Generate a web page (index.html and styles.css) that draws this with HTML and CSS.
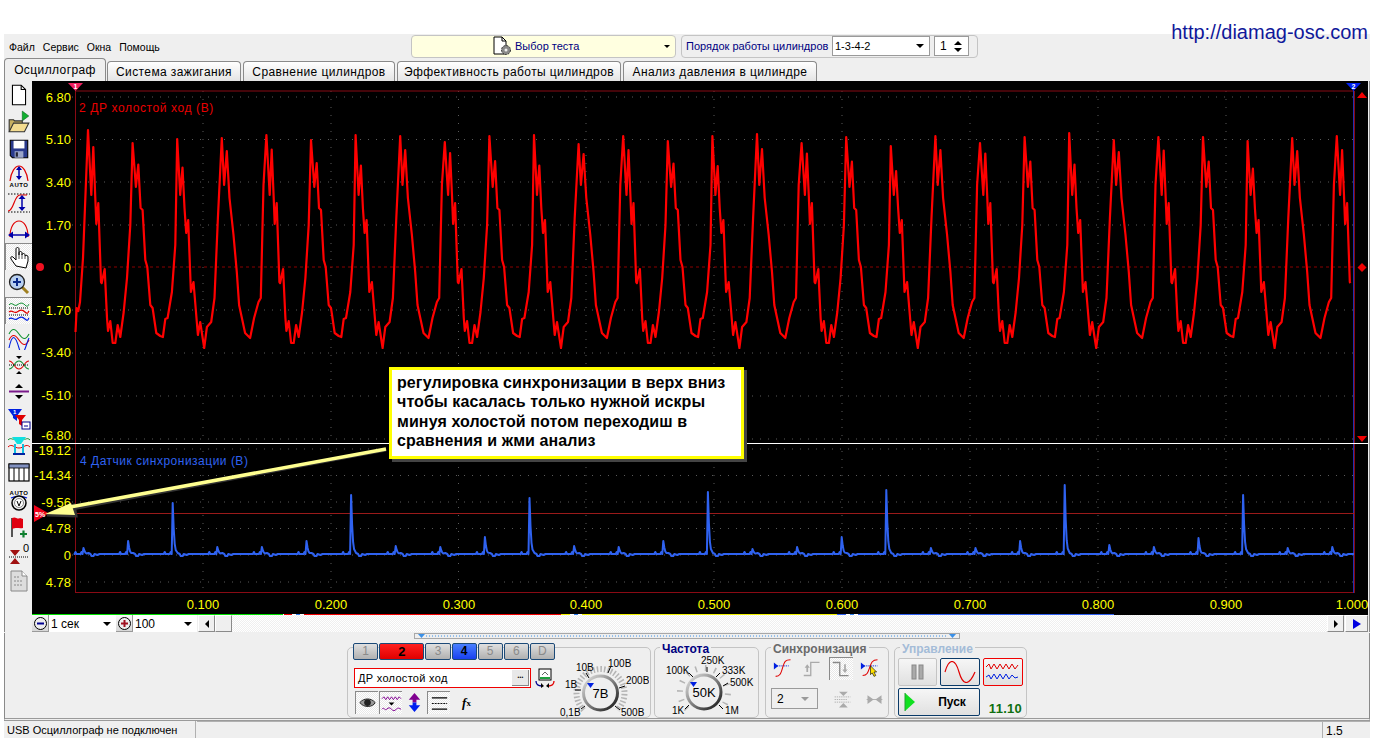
FILE: index.html
```html
<!DOCTYPE html>
<html lang="ru">
<head>
  <meta charset="UTF-8" />
  <title>USB Осциллограф</title>
  <link rel="stylesheet" href="styles.css">
</head>
<body>
  <a class="site-link">http://diamag-osc.com</a>

  <div class="app">
    <div class="top-bar">
      <div class="menu">
        <span>Файл</span><span>Сервис</span><span>Окна</span><span>Помощь</span>
      </div>
      <div class="test-select">
        <svg class="test-icon" width="22" height="20" viewBox="0 0 22 20">
          <path d="M3 1h8l4 4v13H3z" fill="#fff" stroke="#000"/>
          <path d="M11 1v4h4" fill="none" stroke="#000"/>
          <circle cx="15" cy="14" r="4.5" fill="#888" stroke="#333" stroke-width="1" stroke-dasharray="2 1"/>
          <circle cx="15" cy="14" r="1.5" fill="#eee"/>
        </svg>
        <span class="test-label">Выбор теста</span>
        <span class="arrow-down small"></span>
      </div>
      <div class="order-panel">
        <span class="order-label">Порядок работы цилиндров</span>
        <div class="combo order-combo"><span>1-3-4-2</span><span class="arrow-down"></span></div>
        <div class="spin"><span>1</span><span class="spin-arrows"><i class="arrow-up"></i><i class="arrow-down"></i></span></div>
      </div>
    </div>

    <div class="tabs">
      <div class="tab active">Осциллограф</div>
      <div class="tab w2">Система зажигания</div>
      <div class="tab w3">Сравнение цилиндров</div>
      <div class="tab w4">Эффективность работы цилиндров</div>
      <div class="tab w5">Анализ давления в цилиндре</div>
    </div>

    <div class="workspace">
      <div class="toolbar">
        <div class="tool"><svg viewBox="0 0 22 22"><path d="M5 2h8l4 4v14H5z" fill="#fff" stroke="#000"/><path d="M13 2v4h4" fill="none" stroke="#000"/></svg></div>
        <div class="tool"><svg viewBox="0 0 22 22"><path d="M14 1v9l6-4.500z" fill="#10b030" stroke="#086018" stroke-width=".5"/><path d="M2 20V9h4l1 1h7v3" fill="#c8b060" stroke="#333"/><path d="M2 20l4-8h14l-4 8z" fill="#f4dc90" stroke="#333"/></svg></div>
        <div class="tool"><svg viewBox="0 0 22 22"><path d="M3 3h16v16H5l-2-2z" fill="#2a3a8c" stroke="#000"/><rect x="6" y="3.500" width="10" height="7" fill="#fff"/><rect x="7" y="13" width="8" height="6" fill="#9aa4c8"/><rect x="8" y="14" width="2" height="4" fill="#223"/></svg></div>
        <div class="tool"><svg viewBox="0 0 24 24"><path d="M3 17C4 8 8 2 12 2s8 6 9 15" fill="none" stroke="#e00000" stroke-width="1.200"/><path d="M12 3v12" stroke="#00a" stroke-width="1.500"/><path d="M9 6l3-4 3 4zM9 12l3 4 3-4z" fill="#00a"/><text class="tiny-label" x="12" y="23">AUTO</text></svg></div>
        <div class="tool"><svg viewBox="0 0 24 24"><path d="M1 3h22" stroke="#000" stroke-dasharray="1.500 1.500"/><path d="M1 21h22" stroke="#000" stroke-dasharray="1.500 1.500"/><path d="M1 20c6 0 6-16 12-16 3 0 4 0 7 0" fill="none" stroke="#e00000" stroke-width="1.200"/><path d="M15 5v14" stroke="#00a" stroke-width="1.500"/><path d="M11.500 8l3.500-4 3.500 4zM11.500 16l3.500 4 3.500-4z" fill="#00a"/></svg></div>
        <div class="tool"><svg viewBox="0 0 24 24"><path d="M3 19C3 9 7 3 12 3s9 6 9 16" fill="none" stroke="#e00000" stroke-width="1.200"/><path d="M3 17h18" stroke="#00a" stroke-width="1.500"/><path d="M6 13.500L1 17l5 3.500zM18 13.500l5 3.500-5 3.500z" fill="#00a"/></svg></div>
        <div class="tool pressed"><svg viewBox="0 0 24 24"><path d="M9 21l-5-7c-1-2 1-3 2-2l3 3V4c0-2 3-2 3 0v6-2c0-2 3-2 3 0v2c0-2 3-2 3 0v1c1-1 3-1 3 1v4l-2 7z" fill="#fff" stroke="#000"/><path d="M12 10v4M15 10v4M18 11v3" stroke="#000" stroke-width=".7"/></svg></div>
        <div class="tool"><svg viewBox="0 0 24 24"><path d="M14 14l7 7" stroke="#a08020" stroke-width="3"/><circle cx="10" cy="10" r="7.500" fill="#b8d0f0" stroke="#222" stroke-width="1.300"/><path d="M6 10h8M10 6v8" stroke="#0a2a8a" stroke-width="2"/></svg></div>
        <div class="tool pressed"><svg viewBox="0 0 24 24"><path d="M2 6c3-4 5 2 8 0s5-3 8 0 3 0 4-1" fill="none" stroke="#109030"/><path d="M2 9h20M2 16h20" stroke="#000" stroke-dasharray="1 1"/><path d="M2 13c3-3 5 2 8 0s5-3 8 0 3 0 4-1" fill="none" stroke="#e00000" stroke-width="1.200"/><path d="M2 20c3-3 5 2 8 0s5-3 8 0 3 0 4-1" fill="none" stroke="#0020e0" stroke-width="1.200"/></svg></div>
        <div class="tool"><svg viewBox="0 0 24 24"><path d="M2 8c3-6 6-6 10 0s7 6 10 0" fill="none" stroke="#109030" stroke-width="1.100"/><path d="M2 14c3-6 6-6 10 0s7 6 10 0" fill="none" stroke="#e00000" stroke-width="1.100"/><path d="M2 22c3-14 6-14 10 0s7-4 10-10" fill="none" stroke="#0020e0" stroke-width="1.100"/></svg></div>
        <div class="tool"><svg viewBox="0 0 24 24"><path d="M9 3h6l-3 3zM9 21h6l-3-3z" fill="#000"/><path d="M2 8c5 0 5 8 10 8s5-8 10-8" fill="none" stroke="#e00000" stroke-width="1.100"/><path d="M2 16c5 0 5-8 10-8s5 8 10 8" fill="none" stroke="#109030" stroke-width="1.100"/><path d="M2 12h20" stroke="#000" stroke-dasharray="1 1"/></svg></div>
        <div class="tool"><svg viewBox="0 0 24 24"><path d="M2 11.500h20" stroke="#7a1a8a" stroke-width="2"/><path d="M8 8l4-4 4 4zM8 15l4 4 4-4z" fill="#000"/></svg></div>
        <div class="tool"><svg viewBox="0 0 24 24"><path d="M1 2h14l-5 7v5l-4-3V9z" fill="#0020e0"/><path d="M8 8h11l-4 5v6l-3-2v-4z" fill="#e00000"/><text class="tiny-label white" x="8" y="7">1</text><rect x="15" y="15" width="8" height="7" fill="#fff" stroke="#000090"/><path d="M17 19h4" stroke="#000090"/></svg></div>
        <div class="tool"><svg viewBox="0 0 24 24"><path d="M1 6c3-3 4 0 6-1h10c2 1 3-2 6 1" fill="none" stroke="#109030"/><path d="M5 3h14l-5 7H10z" fill="#10e0e0"/><path d="M1 13c4-4 6 1 11 1s7-5 11-1" fill="none" stroke="#e00000"/><path d="M8 10v9M16 10v9" stroke="#10c0e0" stroke-width="2"/><path d="M6 20h12" stroke="#0020a0" stroke-width="2"/></svg></div>
        <div class="tool"><svg viewBox="0 0 24 24"><rect x="2" y="3" width="20" height="17" fill="#fff" stroke="#000" stroke-width="1.200"/><rect x="2" y="3" width="20" height="4" fill="#8090c0" stroke="#000" stroke-width=".8"/><path d="M7 7v13M12 7v13M17 7v13" stroke="#000"/></svg></div>
        <div class="tool"><svg viewBox="0 0 24 24"><text class="tiny-label" x="12" y="7">AUTO</text><path d="M4 10c4-2 12-2 16 0" fill="none" stroke="#0020e0" stroke-width="1.300"/><circle cx="12" cy="15" r="7" fill="#eee" stroke="#000" stroke-width="1.500"/><circle cx="12" cy="15" r="4.500" fill="#fff" stroke="#888"/><path d="M10 13l2 5 2-5" fill="none" stroke="#000"/></svg></div>
        <div class="tool"><svg viewBox="0 0 24 24"><path d="M5 3v19" stroke="#000" stroke-width="1.300"/><path d="M5 3c4-2 5 2 8 0l3 1v9c-4 1-6-1-11 1z" fill="#e00010"/><path d="M13 19h7M16.500 15.500v7" stroke="#108030" stroke-width="2.200"/></svg></div>
        <div class="tool"><svg viewBox="0 0 24 24"><path d="M3 8h10l-5 6zM3 22h10l-5-6z" fill="#a01010"/><path d="M2 15h20" stroke="#000" stroke-dasharray="1 1"/><text class="zero-label" x="19" y="10">0</text></svg></div>
        <div class="tool"><svg viewBox="0 0 24 24"><path d="M4 2h11l5 5v15H4z" fill="#ddd" stroke="#888"/><path d="M15 2v5h5" fill="#fff" stroke="#888"/><path d="M7 8h5M7 12h9M7 16h9" stroke="#888" stroke-dasharray="2 1"/></svg></div>
      </div>

      <div class="scope-column">
        <div class="scope">
          <svg class="scope-plot" width="1336" height="534" viewBox="32 81 1336 534">
            <rect x="32" y="81" width="1336" height="534" fill="#000"/>

            <path class="grid" d="M72 97H1354M72 139.500H1354M72 182H1354M72 225H1354M72 310H1354M72 353H1354M72 396H1354M72 439H1354"/>
            <path class="grid" d="M72 449H1354M72 475.500H1354M72 502H1354M72 528.500H1354M72 555H1354M72 582H1354"/>
            <path class="grid" d="M203 91V592M331 91V592M458.500 91V592M586 91V592M714 91V592M842 91V592M970 91V592M1098 91V592M1226 91V592"/>
            <path class="zero-line" d="M72 267H1354"/>

            <path class="frame-line" d="M75 91H1354M75 592.500H1354M75.500 88V593M1354.500 91V593"/>
            <path class="blue-cursor" d="M1353.500 88V593"/>
            <path class="trigger-line" d="M50 513.500H1354"/>

            <path id="traceTop" class="trace-top" d=""/>
            <path id="traceSync" class="trace-sync" d=""/>

            <path class="splitter" d="M32 443.500H1368"/>

            <text class="axis-y" x="71" y="102">6.80</text>
            <text class="axis-y" x="71" y="144">5.10</text>
            <text class="axis-y" x="71" y="187">3.40</text>
            <text class="axis-y" x="71" y="230">1.70</text>
            <text class="axis-y" x="71" y="272">0</text>
            <text class="axis-y" x="71" y="315">-1.70</text>
            <text class="axis-y" x="71" y="357">-3.40</text>
            <text class="axis-y" x="71" y="400">-5.10</text>
            <text class="axis-y" x="71" y="440">-6.80</text>
            <text class="axis-y" x="71" y="455">-19.12</text>
            <text class="axis-y" x="71" y="480">-14.34</text>
            <text class="axis-y" x="71" y="507">-9.56</text>
            <text class="axis-y" x="71" y="533">-4.78</text>
            <text class="axis-y" x="71" y="560">0</text>
            <text class="axis-y" x="71" y="587">4.78</text>

            <text class="axis-x" x="203" y="609">0.100</text>
            <text class="axis-x" x="331" y="609">0.200</text>
            <text class="axis-x" x="459" y="609">0.300</text>
            <text class="axis-x" x="586" y="609">0.400</text>
            <text class="axis-x" x="714" y="609">0.500</text>
            <text class="axis-x" x="842" y="609">0.600</text>
            <text class="axis-x" x="970" y="609">0.700</text>
            <text class="axis-x" x="1098" y="609">0.800</text>
            <text class="axis-x" x="1226" y="609">0.900</text>
            <text class="axis-x" x="1352" y="609">1.000</text>

            <text class="trace-name red" x="79" y="112">2 ДР холостой ход (В)</text>
            <text class="trace-name blue" x="80" y="465">4 Датчик синхронизации (В)</text>

            <!-- cursors and markers -->
            <path d="M68 83h15l-7.500 8z" fill="#f02060"/>
            <text class="marker-num" x="75.500" y="89">1</text>
            <path d="M1346 83h15l-7.500 8z" fill="#0020f0"/>
            <text class="marker-num" x="1353.500" y="89">2</text>
            <circle cx="40" cy="267" r="4" fill="#f01020"/>
            <path d="M1357 98l5-6 5 6zM1357 436l5 6 5-6z" fill="#f00000"/>
            <path d="M1362 263l4.500 4.500-4.500 4.500-4.500-4.500z" fill="#f00000"/>
            <path d="M34 505l15 8.500-15 8.500z" fill="#f00018"/>
            <text class="marker-small" x="35" y="516.500">5%</text>

            <!-- hint arrow from the note to the trigger level -->
            <path class="hint-shadow" d="M386 450L72 509M47 515L74 505L76 516z"/>
            <path class="hint-line" d="M386 449L70 507"/>
            <path class="hint-head" d="M45 514L71 503L75 515z"/>

            <!-- coloured strip under the plot -->
            <rect x="32" y="614" width="251" height="2" fill="#00e000"/>
            <rect x="283" y="614" width="21" height="2" fill="#fff"/>
            <rect x="284" y="614" width="8" height="2" fill="#f00000"/>
            <rect x="296" y="614" width="4" height="2" fill="#3080f0"/>
            <rect x="304" y="614" width="257" height="2" fill="#f00000"/>
            <rect x="561" y="614" width="21" height="2" fill="#fff"/>
            <rect x="561" y="614" width="9" height="2" fill="#f0f000"/>
            <rect x="574" y="614" width="4" height="2" fill="#3080f0"/>
            <rect x="582" y="614" width="255" height="2" fill="#f0f000"/>
            <rect x="837" y="614" width="21" height="2" fill="#fff"/>
            <rect x="837" y="614" width="9" height="2" fill="#3060f0"/>
            <rect x="850" y="614" width="4" height="2" fill="#3080f0"/>
            <rect x="858" y="614" width="256" height="2" fill="#3060f0"/>
          </svg>

          <div class="note">
            регулировка синхронизации в верх вниз<br>
            чтобы касалась только нужной искры<br>
            минуя холостой потом переходиш в<br>
            сравнения и жми анализ
          </div>
        </div>

        <div class="scroll-row">
          <div class="zoom-btn"><svg width="15" height="15" viewBox="0 0 15 15"><circle cx="7.500" cy="7.500" r="6" fill="#eee" stroke="#000"/><path d="M4 7.500h7" stroke="#000090" stroke-width="2"/></svg></div>
          <div class="combo scale-combo first"><span>1 сек</span><span class="arrow-down"></span></div>
          <div class="zoom-btn"><svg width="15" height="15" viewBox="0 0 15 15"><circle cx="7.500" cy="7.500" r="6" fill="#eee" stroke="#000"/><path d="M4 7.500h7M7.500 4v7" stroke="#a01020" stroke-width="2"/></svg></div>
          <div class="combo scale-combo second"><span>100</span><span class="arrow-down"></span></div>
          <div class="scroll-btn"><i class="arrow-left"></i></div>
          <div class="scroll-btn"></div>
          <div class="scroll-track"></div>
          <div class="scroll-btn"><i class="arrow-right"></i></div>
          <div class="scroll-btn play"><i class="arrow-right blue"></i></div>
        </div>
      </div>
    </div>

    <div class="strip">
      <svg class="strip-handle" width="546" height="6" viewBox="0 0 546 6">
        <rect x=".5" y=".5" width="545" height="5" fill="#efefef" stroke="#a8a8a8"/>
        <path d="M12 3H534" stroke="#3a90e8" stroke-dasharray="1 2"/>
        <path d="M4 1h7l-3.500 4zM535 1h7l-3.500 4z" fill="#3a90e8"/>
      </svg>

      <div class="controls">
        <div class="group channels">
          <div class="channel-left">
            <div class="channel-row">
              <div class="ch">1</div>
              <div class="ch on red">2</div>
              <div class="ch">3</div>
              <div class="ch on blue">4</div>
              <div class="ch">5</div>
              <div class="ch">6</div>
              <div class="ch">D</div>
            </div>
            <div class="name-row">
              <div class="name-input"><span>ДР холостой ход</span><span class="dots">•••</span></div>
              <svg width="20" height="20" viewBox="0 0 20 20"><rect x="4" y="1" width="12" height="11" fill="#fff" stroke="#000"/><path d="M5 10h10" stroke="#20a040" stroke-width="2"/><path d="M7 7l3-3 3 3" fill="none" stroke="#666"/><path d="M1 13c0 3 2 5 6 5" fill="none" stroke="#000090" stroke-width="1.300"/><path d="M19 13c0 3-2 5-6 5" fill="none" stroke="#e00000" stroke-width="1.300"/><path d="M6 15l3 3-3 2zM14 15l-3 3 3 2z" fill="#000"/></svg>
            </div>
            <div class="icon-row">
              <div class="icon-btn pressed"><svg viewBox="0 0 22 22"><path d="M3 10c4-5 12-5 16 0-2 5-12 6-16 0z" fill="#999" stroke="#222"/><circle cx="11" cy="10" r="3.500" fill="#222"/></svg></div>
              <div class="icon-btn pressed"><svg viewBox="0 0 22 22"><path d="M1 6l2-2 2 3 2-3 2 3 2-3 2 3 2-3 2 3 2-3 2 2" fill="none" stroke="#800090"/><path d="M8 10h6l-3 3z" fill="#000"/><path d="M1 17c2-3 3 2 5 0s3-2 5 0 3 2 5 0 3-1 5 0" fill="none" stroke="#800090"/></svg></div>
              <div class="icon-btn"><svg viewBox="0 0 22 22"><path d="M11 1l6 7h-4v3H9V8H5z" fill="#800090"/><path d="M11 21l6-7h-4v-3H9v3H5z" fill="#0020f0"/></svg></div>
              <div class="icon-btn pressed"><svg viewBox="0 0 22 22"><path d="M3 5h16M3 17h16" stroke="#000" stroke-width="1.300"/><path d="M3 11h16" stroke="#000" stroke-dasharray="2 1"/></svg></div>
              <div class="icon-btn fx"><i>f</i><sub>x</sub></div>
            </div>
          </div>
          <svg class="knob" width="94" height="70" viewBox="555 647 94 70">
            <defs>
              <linearGradient id="ringShade" x1="0" y1="0" x2="1" y2="1">
                <stop offset="0" stop-color="#e4e4e4"/>
                <stop offset=".55" stop-color="#777"/>
                <stop offset="1" stop-color="#111"/>
              </linearGradient>
            </defs>
            <path class="knob-ticks" d="M583.500 709A24 24 0 1 1 617.500 709"/>
            <circle cx="600.500" cy="692" r="17" class="knob-ring"/>
            <path class="knob-mark" d="M585 705l-4 3M575 689h6M586 672l3 5M610.500 666l-2.500 6M625 685l-6 2M615 705l5 4"/>
            <path d="M587 682h7l-3.500 5z" fill="#0020e0"/>
            <text class="knob-label" x="560" y="715">0,1В</text>
            <text class="knob-label" x="565" y="687">1В</text>
            <text class="knob-label" x="576" y="670">10В</text>
            <text class="knob-label" x="608" y="666">100В</text>
            <text class="knob-label" x="626" y="683">200В</text>
            <text class="knob-label" x="621" y="715">500В</text>
            <text class="knob-value" x="600.500" y="697">7В</text>
          </svg>
        </div>

        <div class="group frequency">
          <span class="group-title navy">Частота</span>
          <svg class="knob" width="103" height="69" viewBox="655 648 103 69">
            <path class="knob-ticks wide" d="M687 709A24 24 0 1 1 721 709"/>
            <circle cx="704" cy="692" r="17" class="knob-ring"/>
            <path class="knob-mark" d="M689 705l-4 4M689 673l4 4M707 667v5M720 673l-4 4M728 683l-5 3M719 705l4 4"/>
            <path d="M690 682h7l-3.500 5z" fill="#0020e0"/>
            <text class="knob-label" x="672" y="714">1K</text>
            <text class="knob-label" x="666" y="674">100K</text>
            <text class="knob-label" x="701" y="664">250K</text>
            <text class="knob-label" x="722" y="674">333K</text>
            <text class="knob-label" x="730" y="686">500K</text>
            <text class="knob-label" x="725" y="714">1M</text>
            <text class="knob-value" x="704" y="697">50K</text>
          </svg>
        </div>

        <div class="group sync">
          <span class="group-title grey">Синхронизация</span>
          <div class="sync-row">
            <div class="icon-btn wide"><svg viewBox="0 0 24 24"><path d="M2 9h16" stroke="#0020e0" stroke-dasharray="1.500 1"/><path d="M1 5l5 4-5 4z" fill="#0020e0"/><path d="M3 21c5 0 6-3 8-10s3-9 9-9" fill="none" stroke="#e00000" stroke-width="1.200"/></svg></div>
            <div class="icon-btn wide"><svg viewBox="0 0 24 24"><path d="M2 20h8V5h10" fill="none" stroke="#aaa" stroke-width="1.500"/><path d="M3 11h6l-3-4zM5 11h2v5H5z" fill="#aaa"/></svg></div>
            <div class="icon-btn wide pressed"><svg viewBox="0 0 24 24"><path d="M2 4h8v15h10" fill="none" stroke="#888" stroke-width="1.500"/><path d="M13 12h6l-3 4zM15 6h2v6h-2z" fill="#aaa"/></svg></div>
            <div class="icon-btn wide"><svg viewBox="0 0 24 24"><path d="M2 9h18" stroke="#0020e0" stroke-dasharray="1.500 1"/><path d="M1 5l5 4-5 4z" fill="#0020e0"/><path d="M3 20c5 0 6-3 8-9s3-9 9-9" fill="none" stroke="#e00000" stroke-width="1.200"/><path d="M12 9v10l2-2 2 4 2-1-2-4h3z" fill="#ffe000" stroke="#000" stroke-width=".7"/></svg></div>
          </div>
          <div class="sync-row lower">
            <div class="combo sync-combo"><span>2</span><span class="arrow-down grey"></span></div>
            <div class="icon-btn wide"><svg viewBox="0 0 24 24"><path d="M3 9h18M3 12h14M3 15h18" stroke="#aaa" stroke-dasharray="1.500 1"/><path d="M8 3h10l-5 5zM8 21h10l-5-5z" fill="#aaa"/></svg></div>
            <div class="icon-btn wide"><svg viewBox="0 0 24 24"><path d="M3 12h18" stroke="#aaa"/><path d="M4 7l7 5-7 5zM20 7l-7 5 7 5z" fill="#aaa"/></svg></div>
          </div>
        </div>

        <div class="group control">
          <span class="group-title pale">Управление</span>
          <div class="control-grid">
            <div class="ctl pause"><svg width="14" height="16" viewBox="0 0 14 16"><rect x="1" y="1" width="4" height="14" fill="#aaa" stroke="#888"/><rect x="8" y="1" width="4" height="14" fill="#aaa" stroke="#888"/></svg></div>
            <div class="ctl navy-edge"><svg width="32" height="22" viewBox="0 0 32 22"><path d="M1 11c4-14 10-14 14 0s10 14 16 0" fill="none" stroke="#e00000" stroke-width="1.200"/></svg></div>
            <div class="ctl red-edge"><svg width="36" height="24" viewBox="0 0 36 24"><path d="M1 7l3-3 2 5 3-5 3 5 3-5 3 5 3-5 3 5 3-5 3 5 3-4" fill="none" stroke="#e00000"/><path d="M1 17l3-2 2 4 3-5 3 5 3-5 3 5 3-5 3 5 3-4 3 3 3-1" fill="none" stroke="#0020e0"/></svg></div>
            <div class="ctl start navy-edge">
              <svg width="12" height="20" viewBox="0 0 12 20"><path d="M1 1l10 9-10 9z" fill="#10e020"/><path d="M1 1v18" stroke="#20a030"/></svg>
              <b>Пуск</b>
            </div>
            <div class="speed">11.10</div>
          </div>
        </div>
      </div>
    </div>

    <div class="status-bar">
      <span class="status-main">USB Осциллограф не подключен</span>
      <span class="status-mid"></span>
      <span class="status-end">1.5</span>
    </div>
  </div>

  <script src="chart.js"></script>
</body>
</html>
```

FILE: styles.css
```css
body {
  font-family: "Liberation Sans", Arial, sans-serif;
  font-size: 11px;
  background-color: #ffffff;
  margin: 0;
  height: 744px;
  overflow: hidden;
}

.site-link {
  position: absolute;
  top: 21px;
  right: 14px;
  font-size: 20px;
  color: #10189a;
}

.app {
  width: 1366px;
  margin: 34px 0 0 4px;
  background-color: #efefef;
}

/* top row */
.top-bar {
  display: flex;
  align-items: center;
  height: 24px;
}

.menu {
  display: flex;
  gap: 8px;
  width: 402px;
  padding-left: 5px;
  padding-top: 1px;
  font-size: 10.500px;
}

.test-select {
  display: flex;
  align-items: center;
  width: 263px;
  height: 21px;
  background-color: #ffffe0;
  border: 1px solid #c4c4c4;
  border-radius: 4px;
}

.test-icon {
  margin-left: 79px;
}

.test-label {
  color: #000080;
  margin-left: 2px;
  flex-grow: 1;
}

.order-panel {
  display: flex;
  align-items: center;
  gap: 4px;
  width: 295px;
  height: 21px;
  margin-left: 5px;
  border: 1px solid #c4c4c4;
  border-radius: 4px;
}

.order-label {
  color: #000080;
  margin-left: 4px;
  width: 142px;
  white-space: nowrap;
}

.combo {
  display: flex;
  align-items: center;
  justify-content: space-between;
  box-sizing: border-box;
  background: #ffffff;
  padding: 0 5px 0 2px;
}

.order-combo {
  width: 98px;
  height: 20px;
  border: 1px solid #9a9a9a;
}

.spin {
  display: flex;
  align-items: center;
  justify-content: space-between;
  box-sizing: border-box;
  width: 35px;
  height: 20px;
  padding: 0 6px 0 5px;
  font-size: 12px;
  background: #ffffff;
  border: 1px solid #9a9a9a;
}

.spin-arrows {
  display: flex;
  flex-direction: column;
  gap: 3px;
}

.arrow-down, .arrow-up, .arrow-left, .arrow-right {
  display: block;
  width: 0;
  height: 0;
  border-style: solid;
  border-color: transparent;
}

.arrow-down {
  border-width: 4px 4px 0 4px;
  border-top-color: #000;
}

.arrow-down.small {
  border-width: 3px 3px 0 3px;
  margin-right: 5px;
}

.arrow-down.grey {
  border-top-color: #9a9a9a;
}

.arrow-up {
  border-width: 0 4px 4px 4px;
  border-bottom-color: #000;
}

.arrow-left {
  border-width: 4px 4px 4px 0;
  border-right-color: #000;
}

.arrow-right {
  border-width: 4px 0 4px 4px;
  border-left-color: #000;
}

.arrow-right.blue {
  border-width: 5px 0 5px 8px;
  border-left-color: #0000e0;
}

/* tabs */
.tabs {
  display: flex;
  gap: 2px;
  height: 23px;
  align-items: flex-end;
}

.tab {
  box-sizing: border-box;
  height: 20px;
  padding-top: 3px;
  text-align: center;
  font-size: 12px;
  letter-spacing: .4px;
  white-space: nowrap;
  background: linear-gradient(#ffffff, #e4e4e4);
  border: 1px solid #8a8a8a;
  border-bottom: none;
  border-radius: 4px 4px 0 0;
}

.tab.active {
  width: 102px;
  height: 23px;
  padding-top: 4px;
  background: #efefef;
  margin-right: -1px;
}

.w2 { width: 134px; }
.w3 { width: 152px; }
.w4 { width: 224px; }
.w5 { width: 194px; }

/* main area */
.workspace {
  display: flex;
  border-left: 1px solid #8a8a8a;
  border-right: 1px solid #8a8a8a;
}

.toolbar {
  display: flex;
  flex-direction: column;
  width: 27px;
  padding-top: 0;
}

.tool {
  display: flex;
  align-items: center;
  justify-content: center;
  height: 27px;
}

.tool svg {
  width: 24px;
  height: 24px;
}

.tool.pressed, .icon-btn.pressed {
  background: repeating-conic-gradient(#ffffff 0 25%, #e8e8e8 0 50%) 0 0 / 2px 2px;
  border-top: 1px solid #8a8a8a;
  border-left: 1px solid #8a8a8a;
  box-sizing: border-box;
}

.tiny-label {
  font-size: 6px;
  font-weight: bold;
  text-anchor: middle;
  letter-spacing: .5px;
}

.tiny-label.white {
  fill: #ffffff;
}

.zero-label {
  font-size: 11px;
  text-anchor: middle;
}

.scope-column {
  width: 1336px;
}

.scope {
  position: relative;
  height: 534px;
}

.scope-plot {
  display: block;
}

.grid {
  stroke: #5a5a5a;
  stroke-width: 1;
  stroke-dasharray: 1 7;
  fill: none;
}

.zero-line {
  stroke: #8a0000;
  stroke-dasharray: 3 3;
  fill: none;
}

.frame-line {
  stroke: #8a0a14;
  stroke-width: 1;
  fill: none;
}

.blue-cursor {
  stroke: #2030b0;
  stroke-width: 1;
  fill: none;
}

.trigger-line {
  stroke: #9a1a1a;
  stroke-width: 1;
}

.trace-top {
  fill: none;
  stroke: #ff0000;
  stroke-width: 2.200;
  stroke-linejoin: round;
}

.trace-sync {
  fill: none;
  stroke: #2f62f0;
  stroke-width: 2;
  stroke-linejoin: round;
}

.splitter {
  stroke: #ffffff;
  stroke-width: 1;
}

.axis-y {
  fill: #ffff00;
  font-size: 13px;
  text-anchor: end;
}

.axis-x {
  fill: #ffff00;
  font-size: 13px;
  text-anchor: middle;
}

.trace-name {
  font-size: 12px;
  letter-spacing: .6px;
}

.trace-name.red { fill: #e80000; }
.trace-name.blue { fill: #2f62f0; letter-spacing: .5px; }

.marker-num {
  fill: #ffffff;
  font-size: 7px;
  font-weight: bold;
  text-anchor: middle;
}

.marker-small {
  fill: #ffffff;
  font-size: 7px;
  font-weight: bold;
}

.hint-shadow {
  fill: #333;
  stroke: #333;
  stroke-width: 3;
}

.hint-line {
  stroke: #ffff90;
  stroke-width: 3.500;
}

.hint-head {
  fill: #ffff90;
}

.note {
  position: absolute;
  left: 357px;
  top: 286px;
  box-sizing: border-box;
  width: 355px;
  height: 92px;
  padding: 3px 5px;
  background: #ffffff;
  border: 3px solid #ffff00;
  box-shadow: 3px 3px 0 #444;
  font-size: 16px;
  font-weight: bold;
  letter-spacing: .1px;
  line-height: 19.300px;
  white-space: nowrap;
}

/* row under the plot */
.scroll-row {
  display: flex;
  height: 17px;
}

.zoom-btn {
  display: flex;
  align-items: center;
  justify-content: center;
  width: 17px;
  background: linear-gradient(#f8f8f8, #d4d4d4);
  box-shadow: inset -1px -1px 0 #9a9a9a;
}

.scale-combo {
  font-size: 12px;
}

.scale-combo.first { width: 67px; }
.scale-combo.second { width: 64px; margin-right: 1px; }

.scroll-btn {
  display: flex;
  align-items: center;
  justify-content: center;
  box-sizing: border-box;
  width: 17px;
  background: #efefef;
  border: 1px solid #ffffff;
  border-right-color: #8a8a8a;
  border-bottom-color: #8a8a8a;
}

.scroll-btn.play {
  width: 23px;
  margin-left: 1px;
}

.scroll-track {
  flex-grow: 1;
  background: repeating-conic-gradient(#ffffff 0 25%, #efefef 0 50%) 0 0 / 2px 2px;
}

/* control strip */
.strip {
  height: 88px;
  box-sizing: border-box;
  border-left: 1px solid #8a8a8a;
  border-right: 1px solid #8a8a8a;
  border-bottom: 3px double #9a9a9a;
}

.strip-handle {
  display: block;
  margin: 1px 0 0 409px;
}

.controls {
  display: flex;
  margin: 8px 0 0 342px;
}

.group {
  position: relative;
  box-sizing: border-box;
  height: 71px;
  border: 1px solid #c4c4c4;
  border-radius: 5px;
}

.group-title {
  position: absolute;
  top: -6px;
  left: 5px;
  padding: 0 2px;
  background: #efefef;
  font-size: 12px;
  font-weight: bold;
  white-space: nowrap;
}

.group-title.navy { color: #000080; }
.group-title.grey { color: #6a6a6a; }
.group-title.pale { color: #a4bcd8; }

.channels {
  display: flex;
  width: 304px;
}

.channel-left {
  width: 207px;
}

.channel-row {
  display: flex;
  gap: 1px;
  margin: -5px 0 0 5px;
}

.ch {
  box-sizing: border-box;
  width: 26px;
  height: 17px;
  line-height: 15px;
  text-align: center;
  font-size: 12px;
  color: #8a8a8a;
  background: linear-gradient(#e0e0e0, #b0b0b0);
  border: 1px solid #1c4a78;
  border-radius: 2px;
}

.ch.on {
  color: #000;
  font-weight: bold;
}

.ch.red {
  width: 47px;
  font-size: 13px;
  background: linear-gradient(#ff2020, #e00000);
}

.ch.blue {
  background: linear-gradient(#4a80ff, #1840f0);
}

.name-row {
  display: flex;
  align-items: center;
  gap: 4px;
  margin: 8px 0 0 6px;
}

.name-input {
  display: flex;
  align-items: center;
  justify-content: space-between;
  box-sizing: border-box;
  width: 177px;
  height: 20px;
  padding: 0 1px 0 3px;
  background: #ffffff;
  border: 1px solid #f00000;
  font-size: 11px;
  letter-spacing: .3px;
}

.dots {
  width: 17px;
  height: 16px;
  line-height: 15px;
  text-align: center;
  font-size: 5px;
  background: #e8e8e8;
  box-shadow: inset -1px -1px 0 #888;
}

.icon-row {
  display: flex;
  gap: 1px;
  margin: 3px 0 0 7px;
}

.icon-btn {
  display: flex;
  align-items: center;
  justify-content: center;
  width: 23px;
  height: 23px;
}

.icon-btn svg {
  width: 21px;
  height: 21px;
}

.icon-btn.fx {
  margin-left: 4px;
  font: bold 13px "Liberation Serif", serif;
}

.icon-btn.fx sub {
  font-size: 9px;
}

.knob {
  display: block;
  flex-shrink: 0;
}

.knob-ticks {
  fill: none;
  stroke: #b4b4b4;
  stroke-width: 6;
  stroke-dasharray: 1.500 2;
}

.knob-ticks.wide {
  stroke-dasharray: 1.500 8;
}

.knob-ring {
  fill: #efefef;
  stroke: url(#ringShade);
  stroke-width: 3;
}

.knob-mark {
  stroke: #000;
  fill: none;
}

.knob-label {
  font-size: 10px;
}

.knob-value {
  font-size: 13px;
  text-anchor: middle;
}

.frequency {
  width: 105px;
  margin-left: 3px;
}

.sync {
  width: 124px;
  margin-left: 6px;
  padding: 9px 0 0 5px;
}

.sync-row {
  display: flex;
  gap: 5px;
  height: 23px;
}

.sync-row.lower {
  margin-top: 8px;
  gap: 8px;
}

.icon-btn.wide {
  width: 24px;
}

.sync-combo {
  width: 47px;
  height: 21px;
  margin-right: 4px;
  font-size: 12px;
  border: 1px solid #9a9a9a;
  background: transparent;
  padding: 0 8px 0 5px;
}

.control {
  width: 133px;
  margin-left: 5px;
}

.control-grid {
  display: grid;
  grid-template-columns: 39px 40px 40px;
  grid-auto-rows: 28px;
  gap: 2px 3px;
  margin: 10px 0 0 3px;
}

.ctl {
  display: flex;
  align-items: center;
  justify-content: center;
  box-sizing: border-box;
  background: linear-gradient(#f6f6f6, #e0e0e0);
  border-radius: 2px;
}

.ctl.pause {
  border: 1px solid #c4c4c4;
}

.navy-edge {
  border: 1px solid #0a3a68;
}

.red-edge {
  border: 1px solid #f00000;
}

.start {
  grid-column: span 2;
  gap: 22px;
  padding-right: 8px;
  font-size: 12px;
}

.speed {
  align-self: end;
  text-align: center;
  padding-left: 5px;
  color: #107010;
  font-size: 13px;
  font-weight: bold;
  letter-spacing: .3px;
}

/* status bar */
.status-bar {
  display: flex;
  height: 17px;
  line-height: 18px;
}

.status-main {
  width: 188px;
  padding-left: 3px;
  white-space: nowrap;
  box-shadow: 1px 0 0 #b0b0b0;
}

.status-mid {
  flex-grow: 1;
  margin-left: 2px;
  border-top: 1px solid #b0b0b0;
}

.status-end {
  width: 44px;
  padding-left: 3px;
  font-size: 12px;
  border-top: 1px solid #b0b0b0;
  border-left: 1px solid #b0b0b0;
}
```

FILE: chart.js
```javascript
// waveform of the pressure channel: four cylinders repeat, each has its own shape
// points are [px after the peak, y]
const shapes = [
  [[3.3,195],[5.3,152],[7.3,198],[8.3,224],[10.3,203],[13,282],[13.7,283],[16.7,269],[19,318],[20,331],[22.3,321],[24.7,343],[27.3,343],[29.7,325],[32.3,337],[35.7,312],[39,278],[42.3,225]],
  [[3.3,187],[5.7,163],[8,208],[10,210],[12.7,260],[14.7,267],[17.7,305],[20,308],[23.7,333],[27.7,336],[30.3,337],[32.7,319],[35,318],[39.3,292],[42.7,245]],
  [[3,195],[5.3,168],[7.3,208],[9,233],[11,220],[13.7,292],[16.3,282],[20.7,335],[23,322],[27,348],[29.7,327],[34,322],[37.3,298],[40.7,218]],
  [[2.3,185],[5,152],[7.7,198],[11.7,235],[15,272],[17.3,305],[23.3,333],[28.3,338],[32.3,318],[36.7,302],[39,298],[41.7,185]]
];

const peakY = [130,143,139,138,135,140,135,136,142,136,135,144,136,141,136,134,143,137,146,136,143,137,133,140,137,137,141,138,136];

function buildTopTrace() {
  let d = 'M75.5 332L76.7 308L78.3 311L80 302L83 258';
  peakY.forEach((y, i) => {
    const peakX = 88 + i * 44.6;
    d += `L${peakX} ${y}`;
    shapes[i % 4].forEach(([dx, py]) => {
      const x = peakX + dx;
      if (x < 1353.5) {
        // second peak follows the height of the main one
        const shifted = dx < 7 && py < 175 ? py + (y - 140) * 0.5 : py;
        d += `L${x.toFixed(1)} ${shifted.toFixed(1)}`;
      }
    });
  });
  return d;
}

// sync channel: small pulse from every cylinder, tall one from the synced cylinder
const pulses = [6,13,51,7,7,13,59,8,7,17,56,8,7,13,62,5,7,17,64,6,6,13,69,9,7,16,59,6,7];

function buildSyncTrace() {
  const base = 554;
  let d = `M75 ${base}`;
  pulses.forEach((h, i) => {
    const x = 83.5 + i * 44.6;
    d += `L${x - 9} ${base}L${x - 8} ${base - 2}L${x - 7} ${base}L${x - 3} ${base}L${x - 2} ${base - 2}L${x - 1} ${base}`;
    d += `L${x} ${base - h}L${x + 1} ${base - h * 0.5}L${x + 2} ${base - h * 0.2}L${x + 3} ${base - h * 0.08}L${x + 5} ${base - 1}`;
    d += `L${x + 7} ${base}L${x + 8} ${base + 2}L${x + 10} ${base + 2}L${x + 11} ${base}L${x + 14} ${base + 1}L${x + 16} ${base}`;
  });
  d += `L1354 ${base}`;
  return d;
}

document.getElementById('traceTop').setAttribute('d', buildTopTrace());
document.getElementById('traceSync').setAttribute('d', buildSyncTrace());
```
